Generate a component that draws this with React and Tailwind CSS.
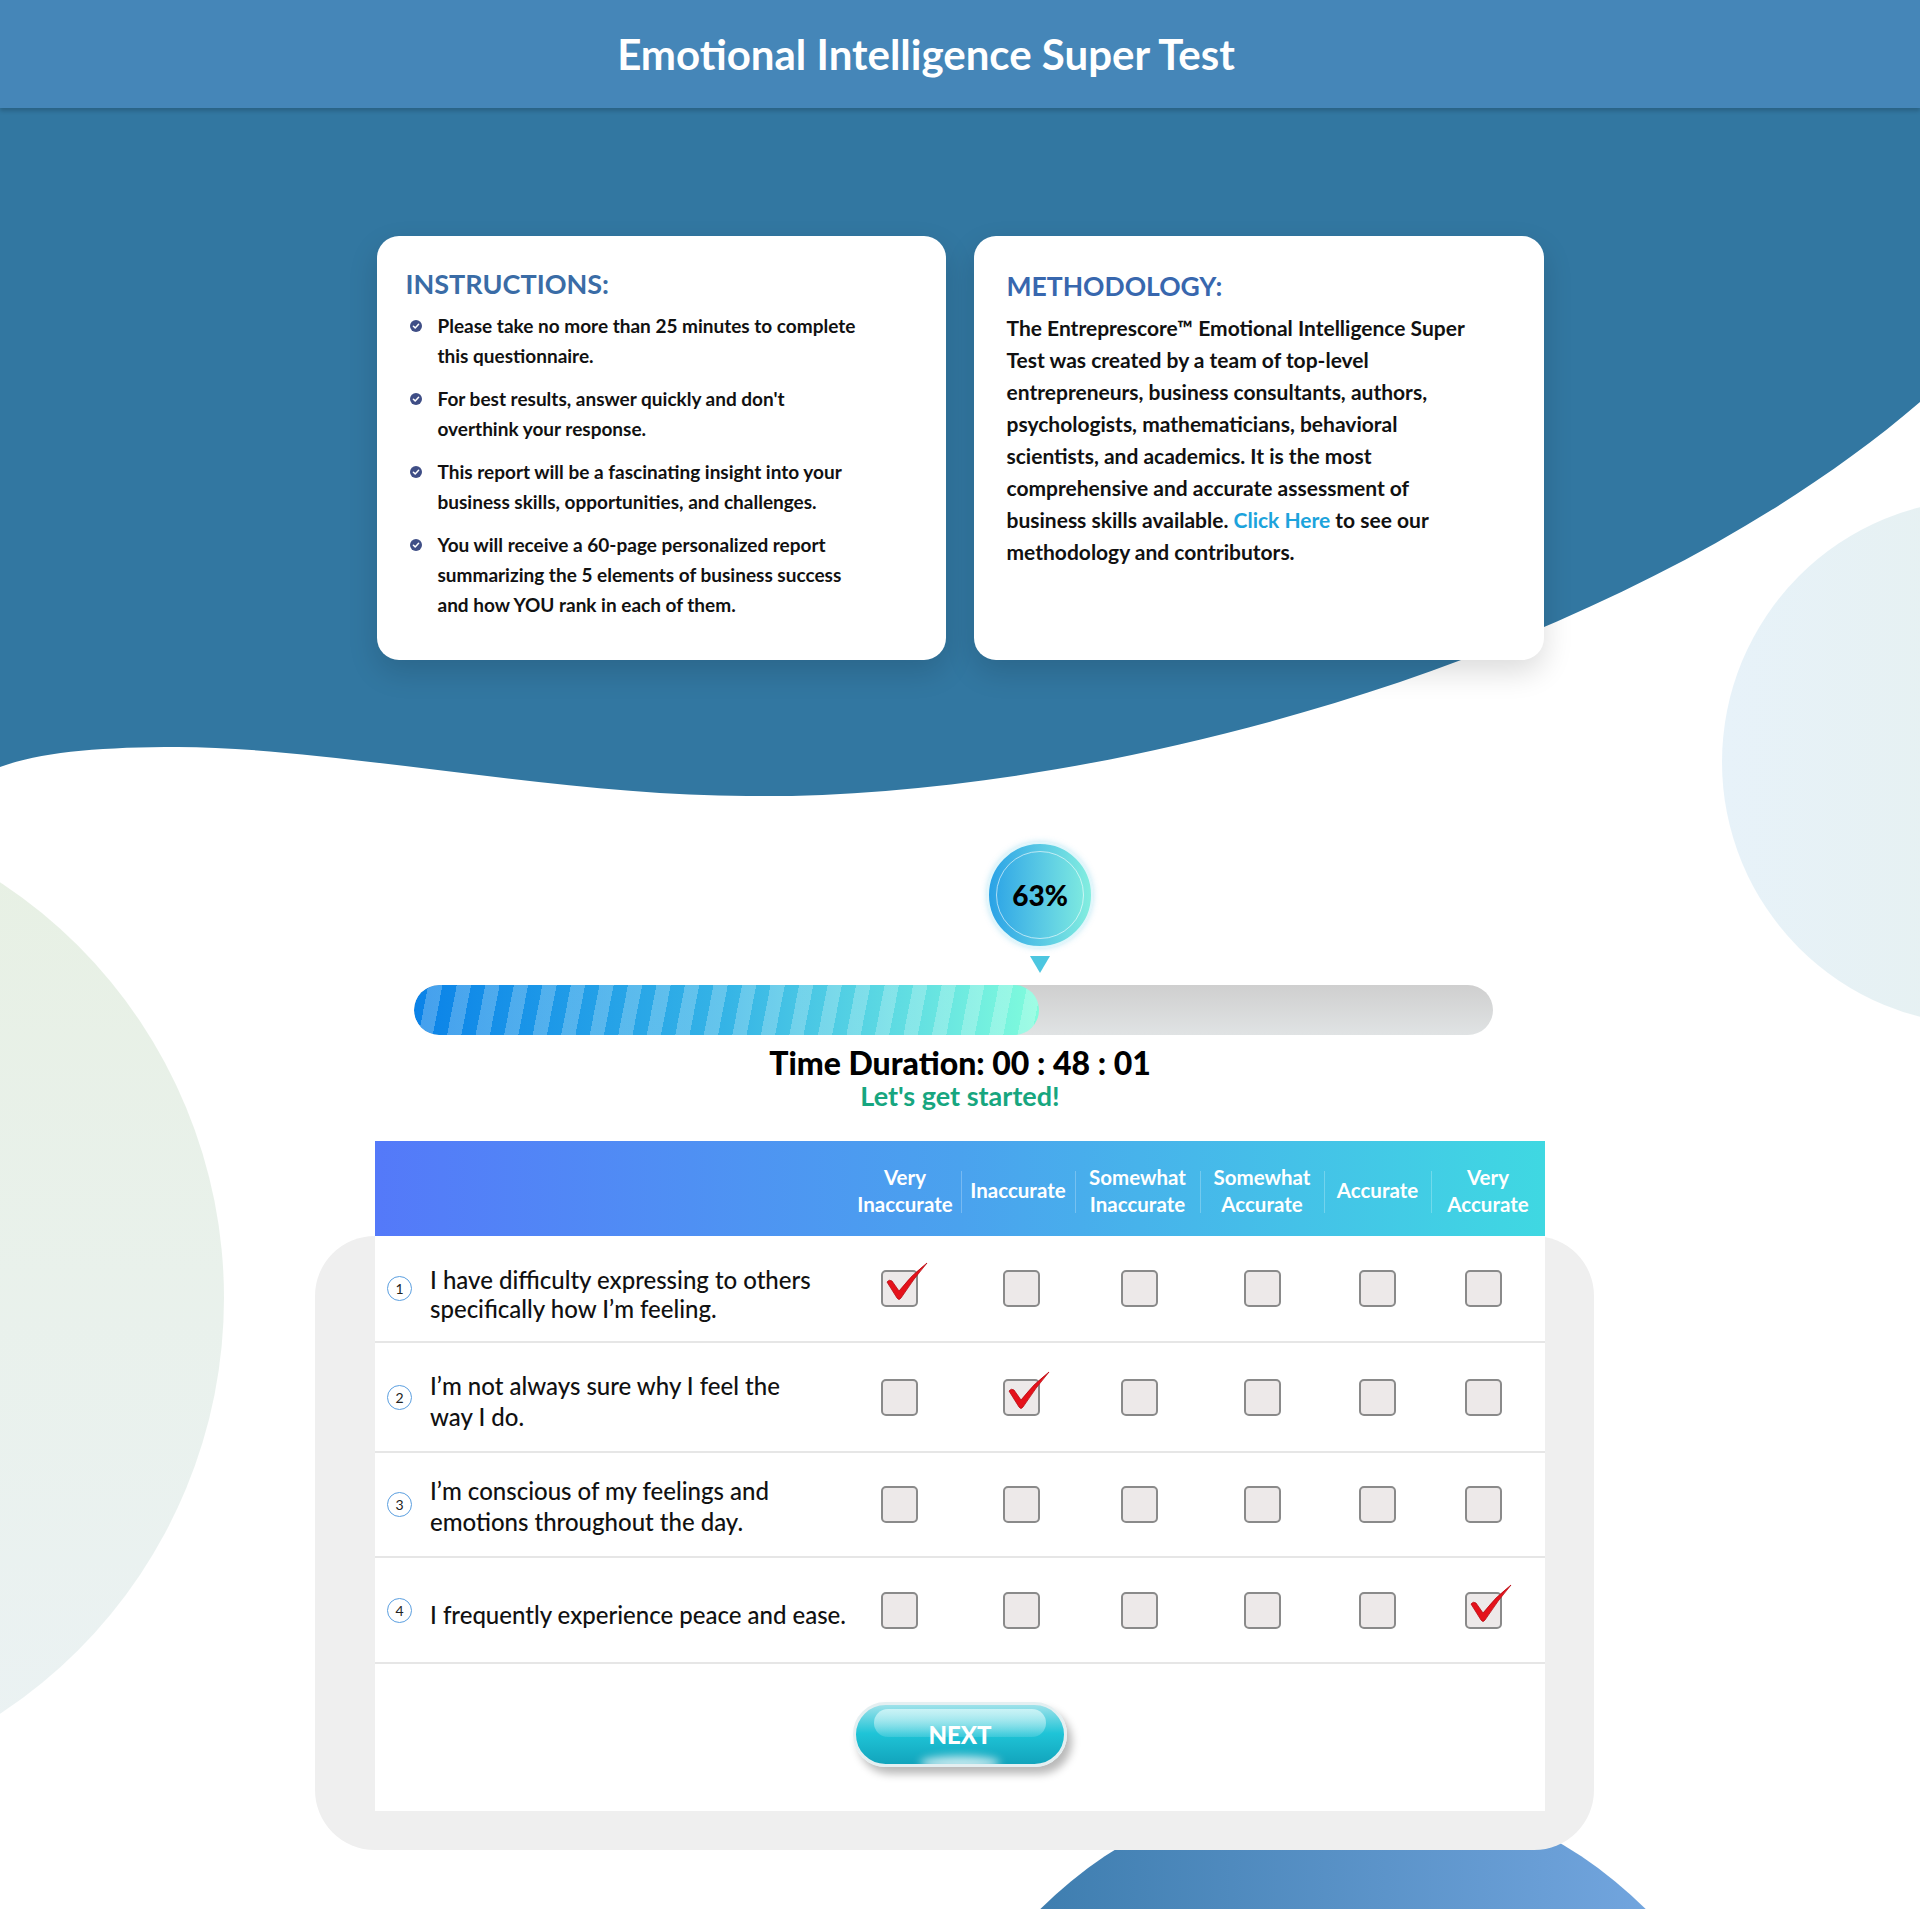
import React from 'react';

const columns = [
  ['Very', 'Inaccurate'],
  ['Inaccurate'],
  ['Somewhat', 'Inaccurate'],
  ['Somewhat', 'Accurate'],
  ['Accurate'],
  ['Very', 'Accurate'],
];

// small nudges so the boxes sit where the original puts them
const boxShift = ['-translate-x-[6px]', 'translate-x-[3px]', 'translate-x-[2px]', '', '', '-translate-x-[5px]'];

const questions = [
  { id: 1, lines: ['I have difficulty expressing to others', 'specifically how I’m feeling.'], answer: 0, tight: true, h: 'h-[107px]', nudge: 'mt-[10px]' },
  { id: 2, lines: ['I’m not always sure why I feel the', 'way I do.'], answer: 1, h: 'h-[110px]', nudge: 'mt-[8px]' },
  { id: 3, lines: ['I’m conscious of my feelings and', 'emotions throughout the day.'], answer: null, h: 'h-[105px]', nudge: 'mt-[2px]' },
  { id: 4, lines: ['I frequently experience peace and ease.'], answer: 5, h: 'h-[106px]', nudge: 'mt-[8px]' },
];

const instructions = [
  ['Please take no more than 25 minutes to complete', 'this questionnaire.'],
  ['For best results, answer quickly and don\'t', 'overthink your response.'],
  ['This report will be a fascinating insight into your', 'business skills, opportunities, and challenges.'],
  ['You will receive a 60-page personalized report', 'summarizing the 5 elements of business success', 'and how YOU rank in each of them.'],
];

const methodology = [
  'The Entreprescore™ Emotional Intelligence Super',
  'Test was created by a team of top-level',
  'entrepreneurs, business consultants, authors,',
  'psychologists, mathematicians, behavioral',
  'scientists, and academics. It is the most',
  'comprehensive and accurate assessment of',
];

function CheckBullet() {
  return (
    <svg viewBox="0 0 12 12" className="ml-[4px] mt-[9px] h-[12px] w-[12px] shrink-0">
      <circle cx="6" cy="6" r="6" fill="#3f4e86" />
      <path d="M3.4 6.2l1.8 1.7 3.4-3.6" fill="none" stroke="#fff" strokeWidth="1.5" strokeLinecap="round" strokeLinejoin="round" />
    </svg>
  );
}

function RedTick() {
  return (
    <svg viewBox="0 0 50 48" className="pointer-events-none absolute left-0 top-[-12px] h-[48px] w-[50px]">
      <path
        d="M6 24 Q8 21 11 23 L18 33 Q30 17 46 5 Q33 20 20 40 Q18 43 16 40 Z"
        fill="#e5121b"
        stroke="#b80d14"
        strokeWidth="0.8"
        strokeLinejoin="round"
      />
    </svg>
  );
}

function Box({ checked }) {
  return (
    <div className="relative h-[37px] w-[37px]">
      <div className="h-[37px] w-[37px] rounded-[5px] border-2 border-[#8a8a8a] bg-[#ede9e9]" />
      {checked && <RedTick />}
    </div>
  );
}

export default function App() {
  return (
    <div className="relative h-[1909px] w-full overflow-hidden bg-white font-['Lato',sans-serif]">
      {/* backdrop shapes */}
      <svg className="absolute left-0 top-0 h-[800px] w-[1920px]" viewBox="0 0 1920 800">
        <path
          d="M0 0 H1920 V402 C1620 660 1100 800 747 796 C560 796 330 747 178 747 C100 747 40 752 0 767 Z"
          fill="#3277a1"
        />
      </svg>
      <div className="absolute left-[-772px] top-[800px] h-[996px] w-[996px] rounded-full bg-gradient-to-b from-[#e7f0e3] to-[#ebf2f4]" />
      <div className="absolute left-[1722px] top-[499px] h-[526px] w-[526px] rounded-full bg-gradient-to-r from-[#e7f2f9] to-[#e5efe8]" />
      <div className="absolute left-[914px] top-[1784px] h-[858px] w-[858px] rounded-full bg-gradient-to-r from-[#3376a6] to-[#7cade8]" />

      <div className="relative">
        <header className="flex h-[108px] items-center justify-center bg-[#4586b8] pr-[68px] shadow-[0_3px_4px_rgba(0,0,0,0.18)]">
          <h1 className="text-[42px] font-bold leading-none text-white">Emotional Intelligence Super Test</h1>
        </header>

        {/* info cards */}
        <div className="mt-[128px] flex justify-center gap-[28px]">
          <div className="h-[424px] w-[569px] rounded-[22px] bg-white pl-[29px] pt-[31px] shadow-[0_12px_30px_rgba(0,0,0,0.14)]">
            <h2 className="text-[27px] font-bold leading-[34px] text-[#3a6ca6]">INSTRUCTIONS:</h2>
            <ul className="mt-[10px] flex flex-col gap-[13px]">
              {instructions.map((item, i) => (
                <li key={i} className="flex gap-[16px]">
                  <CheckBullet />
                  <p className="text-[19px] font-bold leading-[30px] text-[#111]">
                    {item.map((line, j) => (
                      <span key={j} className="block whitespace-nowrap">{line}</span>
                    ))}
                  </p>
                </li>
              ))}
            </ul>
          </div>

          <div className="h-[424px] w-[570px] rounded-[22px] bg-white pl-[33px] pt-[33px] shadow-[0_12px_30px_rgba(0,0,0,0.14)]">
            <h2 className="text-[26.5px] font-bold leading-[34px] text-[#3867ae]">METHODOLOGY:</h2>
            <p className="mt-[9px] text-[21px] font-bold leading-[32px] text-[#111]">
              {methodology.map((line) => (
                <span key={line} className="block whitespace-nowrap">{line}</span>
              ))}
              <span className="block whitespace-nowrap">
                business skills available. <span className="text-[#1ca3dc]">Click Here</span> to see our
              </span>
              <span className="block whitespace-nowrap">methodology and contributors.</span>
            </p>
          </div>
        </div>

        {/* progress */}
        <div className="ml-[414px] mt-[182px] w-[1079px]">
          <div className="ml-[573px] flex h-[106px] w-[106px] items-center justify-center rounded-full border-2 border-[#dff6fb] bg-gradient-to-r from-[#29a2e6] to-[#83eedf] shadow-[0_0_6px_rgba(60,180,220,0.35)]">
            <div className="flex h-[88px] w-[88px] items-center justify-center rounded-full border border-white/60">
              <span className="text-[28px] font-black text-black">63%</span>
            </div>
          </div>
          <div className="ml-[616px] mt-[8px] h-0 w-0 border-x-[10px] border-t-[17px] border-x-transparent border-t-[#4cc6e0]" />
          <div className="mt-[12px] h-[50px] w-[1079px] overflow-hidden rounded-full bg-gradient-to-b from-[#cfcfcf] to-[#e0e3e4]">
            <div className="relative h-full w-[625px] overflow-hidden rounded-full bg-gradient-to-r from-[#0a82e8] via-[#35b4e6] to-[#80fcdc]">
              <div className="absolute inset-0 bg-[repeating-linear-gradient(101deg,rgba(255,255,255,0)_0px,rgba(255,255,255,0)_14px,rgba(255,255,255,0.24)_14px,rgba(255,255,255,0.24)_28px)]" />
            </div>
          </div>
        </div>

        <p className="mt-[10px] text-center text-[32px] font-black leading-[36px] text-black">Time Duration: 00 : 48 : 01</p>
        <p className="text-center text-[27px] font-bold leading-[30px] text-[#17a67f]">Let's get started!</p>

        {/* question table */}
        <div className="ml-[375px] mt-[30px] grid h-[95px] w-[1170px] grid-cols-[474px_112px_114px_125px_124px_107px_114px] bg-gradient-to-r from-[#5479f9] via-[#4aa2ee] to-[#3fd8e2]">
          <div />
          {columns.map((label, i) => (
            <div key={i} className="relative flex flex-col items-center justify-center pt-[4px] text-[20.5px] font-bold leading-[27px] text-white">
              {i > 0 && <span className="absolute left-0 top-[30px] h-[42px] w-px bg-white/25" />}
              {label.map((l) => (
                <span key={l} className="whitespace-nowrap">{l}</span>
              ))}
            </div>
          ))}
        </div>

        <div className="ml-[315px] w-[1279px] rounded-[60px] bg-[#efefef] pb-[39px] pl-[60px] pr-[49px]">
          <div className="bg-white">
            {questions.map((q) => (
              <div key={q.id} className={`grid ${q.h} grid-cols-[474px_112px_114px_125px_124px_107px_114px] border-b-2 border-[#e6e6e6]`}>
                <div className="flex items-center pl-[12px]">
                  <span className="flex h-[25px] w-[25px] shrink-0 items-center justify-center rounded-full border border-[#5b9fe0] text-[14px] text-[#222]">
                    {q.id}
                  </span>
                  <p className={`ml-[18px] ${q.nudge} text-[24px] font-medium text-[#111] ${q.tight ? 'leading-[29px]' : 'leading-[31px]'}`}>
                    {q.lines.map((l) => (
                      <span key={l} className="block whitespace-nowrap">{l}</span>
                    ))}
                  </p>
                </div>
                {columns.map((_, i) => (
                  <div key={i} className="flex items-center justify-center">
                    <div className={boxShift[i]}>
                      <Box checked={q.answer === i} />
                    </div>
                  </div>
                ))}
              </div>
            ))}

            <div className="flex h-[147px] items-center justify-center pb-[6px]">
              <button className="relative flex h-[65px] w-[214px] items-center justify-center overflow-hidden rounded-full border-[3px] border-[#e4eff1] bg-[linear-gradient(180deg,#9ee2ea_0%,#1fc4d7_48%,#12a4bc_100%)] shadow-[5px_7px_8px_rgba(0,0,0,0.28)]">
                <span className="absolute left-[18px] right-[18px] top-[4px] h-[28px] rounded-full bg-gradient-to-b from-[#c9f3f6] to-[#7fdbe6]/30" />
                <span className="absolute bottom-[-6px] left-1/2 h-[14px] w-[80px] -translate-x-1/2 rounded-[50%] bg-white/75 blur-[4px]" />
                <span className="relative text-[24px] font-black text-white">NEXT</span>
              </button>
            </div>
          </div>
        </div>
      </div>
    </div>
  );
}
